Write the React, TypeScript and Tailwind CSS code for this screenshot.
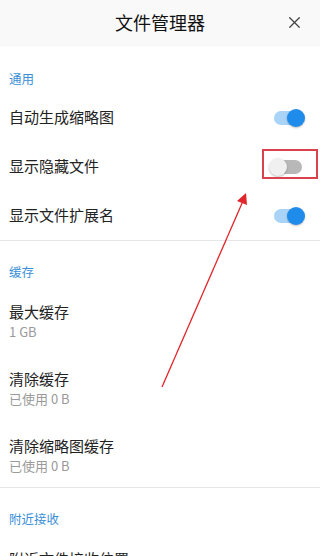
import { X } from 'lucide-react';

const font = { fontFamily: '"Noto Sans CJK SC", "Noto Sans", sans-serif' };

const Toggle = ({ on }: { on: boolean }) => (
  <div className="relative w-[34px] h-[20px] flex items-center">
    <div
      className={`w-[28px] h-[14px] rounded-full ml-[3px] ${on ? 'bg-[#a9d3f7]' : 'bg-[#b8b8b8]'}`}
    />
    <div
      className={`absolute top-[1px] w-[18px] h-[18px] rounded-full shadow-[0_1px_2px_rgba(0,0,0,0.25)] ${
        on ? 'right-0 bg-[#1f8ceb]' : 'left-[-2px] bg-[#f0f0f0]'
      }`}
    />
  </div>
);

const SectionTitle = ({ label }: { label: string }) => (
  <div className="px-[9px] pt-[23px] pb-[6px] text-[12.5px] leading-[16px] text-[#3a8fd8]">
    {label}
  </div>
);

const SwitchRow = ({ label, on }: { label: string; on: boolean }) => (
  <div className="h-[49px] flex items-center justify-between pl-[9px] pr-[15px]">
    <span className="text-[15px] text-[#222]">{label}</span>
    <Toggle on={on} />
  </div>
);

const InfoRow = ({ label, sub }: { label: string; sub: string }) => (
  <div className="h-[67px] flex flex-col justify-center px-[9px] pt-[3px]">
    <span className="text-[15px] leading-[20px] text-[#222]">{label}</span>
    <span className="mt-[1px] min-h-[18px] text-[13px] leading-[18px] text-[#9a9a9a]">{sub}</span>
  </div>
);

const Divider = () => <div className="h-px bg-[#e6e6e6]" />;

export default function App() {
  return (
    <div className="relative w-[320px] h-[556px] overflow-hidden bg-white" style={font}>
      {/* Header */}
      <header className="relative h-[45px] bg-[#f9f9f9] flex items-center justify-center shadow-[0_1px_1px_rgba(0,0,0,0.03)]">
        <h1 className="text-[18px] text-[#111]">文件管理器</h1>
        <X className="absolute right-[16px] top-[13px] text-[#444]" size={19} strokeWidth={1.6} />
      </header>

      <div className="h-[3px]" />

      {/* 通用 */}
      <SectionTitle label="通用" />
      <SwitchRow label="自动生成缩略图" on />
      <SwitchRow label="显示隐藏文件" on={false} />
      <SwitchRow label="显示文件扩展名" on />
      <Divider />

      {/* 缓存 */}
      <SectionTitle label="缓存" />
      <InfoRow label="最大缓存" sub="1 GB" />
      <InfoRow label="清除缓存" sub="已使用 0 B" />
      <InfoRow label="清除缩略图缓存" sub="已使用 0 B" />
      <Divider />

      {/* 附近接收 */}
      <SectionTitle label="附近接收" />
      <InfoRow label="附近文件接收位置" sub="" />

      {/* Annotation overlay */}
      <div className="absolute left-[262px] top-[149px] w-[56px] h-[30px] border-2 border-[#d9434b]" />
      <svg className="absolute left-0 top-0" width="320" height="556" viewBox="0 0 320 556">
        <line x1="162" y1="387" x2="243" y2="201" stroke="#e0262b" strokeWidth="1.3" />
        <polygon points="246,193 237,201 247,205" fill="#e0262b" />
      </svg>
    </div>
  );
}
